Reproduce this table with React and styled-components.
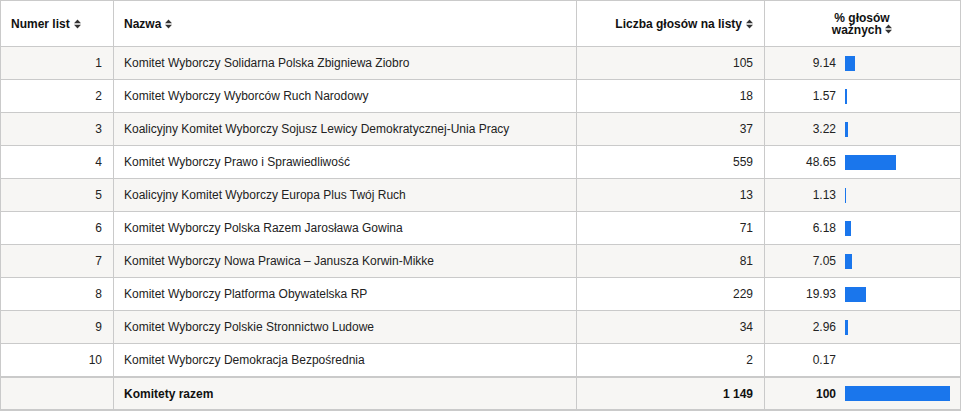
import React from "react";
import styled, { createGlobalStyle } from "styled-components";

const GlobalStyle = createGlobalStyle`
    body {
        margin: 0;
        background: #fff;
        font-family: "Liberation Sans", Arial, sans-serif;
        font-size: 12px;
        color: #222;
    }
`;

const Table = styled.div`
    display: grid;
    grid-template-columns: 113px 463px 188px 196px;
    width: 961px;
    border-top: 1px solid #cacaca;
    border-left: 1px solid #cacaca;
    box-sizing: border-box;
`;

const Cell = styled.div`
    box-sizing: border-box;
    height: ${(p) => (p.$head ? 46 : p.$total ? 34 : 33)}px;
    display: flex;
    align-items: center;
    justify-content: ${(p) => (p.$align === "right" ? "flex-end" : p.$align === "center" ? "center" : "flex-start")};
    padding: 0 11px 0 10px;
    border-right: 1px solid #cacaca;
    border-bottom: ${(p) => (p.$total ? "2px" : "1px")} solid #cacaca;
    border-top: ${(p) => (p.$total ? "1px solid #cacaca" : "none")};
    background: ${(p) => (p.$shaded ? "#f7f6f4" : "#fff")};
    font-weight: ${(p) => (p.$bold ? "bold" : "normal")};
    color: ${(p) => (p.$bold ? "#111" : "#222")};
    white-space: nowrap;
`;

const HeadLabel = styled.span`
    display: inline-flex;
    align-items: center;
    gap: 4px;
    text-align: ${(p) => p.$center ? "center" : "left"};
    line-height: 12px;
`;

const PctCell = styled(Cell)`
    padding: 0;
`;

const PctValue = styled.span`
    width: 71px;
    text-align: right;
    flex: none;
`;

const Bar = styled.div`
    margin-left: 9px;
    height: 15px;
    background: #1a76ec;
    flex: none;
`;

const SortIcon = () => (
    <svg width="7" height="10" viewBox="0 0 7 10" style={{ flex: "none" }}>
        <polygon points="0,4.2 3.5,0.5 7,4.2" fill="#333" />
        <polygon points="0,5.8 3.5,9.5 7,5.8" fill="#333" />
    </svg>
);

const rows = [
    [1, "Komitet Wyborczy Solidarna Polska Zbigniewa Ziobro", "105", 9.14],
    [2, "Komitet Wyborczy Wyborców Ruch Narodowy", "18", 1.57],
    [3, "Koalicyjny Komitet Wyborczy Sojusz Lewicy Demokratycznej-Unia Pracy", "37", 3.22],
    [4, "Komitet Wyborczy Prawo i Sprawiedliwość", "559", 48.65],
    [5, "Koalicyjny Komitet Wyborczy Europa Plus Twój Ruch", "13", 1.13],
    [6, "Komitet Wyborczy Polska Razem Jarosława Gowina", "71", 6.18],
    [7, "Komitet Wyborczy Nowa Prawica – Janusza Korwin-Mikke", "81", 7.05],
    [8, "Komitet Wyborczy Platforma Obywatelska RP", "229", 19.93],
    [9, "Komitet Wyborczy Polskie Stronnictwo Ludowe", "34", 2.96],
    [10, "Komitet Wyborczy Demokracja Bezpośrednia", "2", 0.17],
];

const barWidth = (pct) => Math.round(pct * 1.05);

export default function App() {
    return (
        <>
            <GlobalStyle />
            <Table>
                <Cell $head $bold><HeadLabel>Numer list <SortIcon /></HeadLabel></Cell>
                <Cell $head $bold><HeadLabel>Nazwa <SortIcon /></HeadLabel></Cell>
                <Cell $head $bold $align="right"><HeadLabel>Liczba głosów na listy <SortIcon /></HeadLabel></Cell>
                <Cell $head $bold $align="center">
                    <HeadLabel $center>
                        <span>% głosów<br />ważnych <SortIcon /></span>
                    </HeadLabel>
                </Cell>

                {rows.map(([num, name, votes, pct], i) => {
                    const shaded = i % 2 === 0;
                    return (
                        <React.Fragment key={num}>
                            <Cell $shaded={shaded} $align="right">{num}</Cell>
                            <Cell $shaded={shaded}>{name}</Cell>
                            <Cell $shaded={shaded} $align="right">{votes}</Cell>
                            <PctCell $shaded={shaded}>
                                <PctValue>{pct.toFixed(2)}</PctValue>
                                <Bar style={{ width: barWidth(pct) }} />
                            </PctCell>
                        </React.Fragment>
                    );
                })}

                <Cell $total $shaded />
                <Cell $total $shaded $bold>Komitety razem</Cell>
                <Cell $total $shaded $bold $align="right">1 149</Cell>
                <PctCell $total $shaded $bold>
                    <PctValue>100</PctValue>
                    <Bar style={{ width: barWidth(100) }} />
                </PctCell>
            </Table>
        </>
    );
}
